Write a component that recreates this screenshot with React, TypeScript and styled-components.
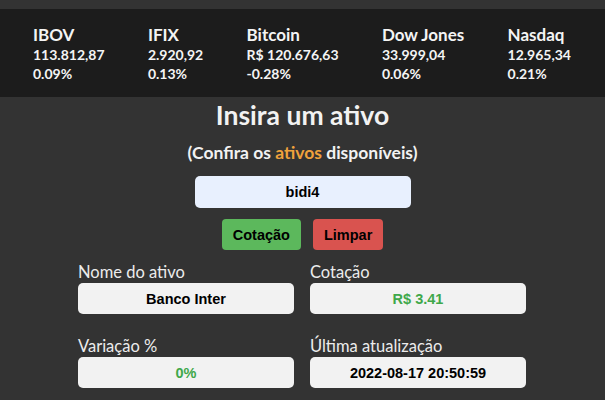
import React from "react";
import styled, { createGlobalStyle } from "styled-components";

const Global = createGlobalStyle`
  html, body { margin: 0; padding: 0; background: #333333; }
  body { font-family: Lato, "Noto Sans", sans-serif; color: #f2f2f2; }
  * { box-sizing: border-box; }
`;

const Page = styled.div`
  padding-top: 9px;
  min-height: 400px;
  background: #333333;
`;

const TickerBar = styled.div`
  background: #1c1c1c;
  height: 88px;
  padding: 15px 34px 14px 33px;
  display: flex;
  justify-content: space-between;
`;

const Ticker = styled.div`
  display: flex;
  flex-direction: column;
  font-weight: 700;
  color: #f4f4f4;
`;

const TickerName = styled.div`
  font-size: 17px;
  line-height: 21px;
`;

const TickerLine = styled.div`
  font-size: 14px;
  line-height: 19px;
`;

const Main = styled.main`
  display: flex;
  flex-direction: column;
  align-items: center;
`;

const Title = styled.h1`
  margin: 3px 0 0;
  font-size: 26.5px;
  line-height: 30px;
  font-weight: 700;
  color: #f2f2f2;
`;

const Subtitle = styled.p`
  margin: 13px 0 0;
  font-size: 17.5px;
  line-height: 20px;
  font-weight: 700;
  color: #f2f2f2;
`;

const Highlight = styled.span`
  color: #f0a23c;
`;

const Input = styled.input`
  margin-top: 13px;
  width: 216px;
  height: 32px;
  border: none;
  border-radius: 5px;
  background: #e8f0fe;
  text-align: center;
  font-family: "Liberation Sans", Arial, sans-serif;
  font-weight: 700;
  font-size: 14.5px;
  color: #000;
  outline: none;
`;

const ButtonRow = styled.div`
  margin-top: 11px;
  display: flex;
  gap: 12px;
`;

const Button = styled.button<{ $bg: string }>`
  height: 31px;
  padding: 0 11px;
  border: none;
  border-radius: 4px;
  background: ${(p) => p.$bg};
  font-family: "Liberation Sans", Arial, sans-serif;
  font-weight: 700;
  font-size: 14.5px;
  color: #000;
`;

const Grid = styled.div`
  margin-top: 13px;
  display: grid;
  grid-template-columns: 216px 216px;
  column-gap: 16px;
  row-gap: 23px;
  margin-left: -1px;
`;

const Field = styled.div`
  display: flex;
  flex-direction: column;
`;

const Label = styled.label`
  font-size: 16.5px;
  line-height: 19px;
  color: #ececec;
  margin-bottom: 1px;
`;

const Value = styled.div<{ $color?: string }>`
  height: 31px;
  border-radius: 5px;
  background: #f2f2f2;
  display: flex;
  align-items: center;
  justify-content: center;
  font-family: "Liberation Sans", Arial, sans-serif;
  font-weight: 700;
  font-size: 14.5px;
  color: ${(p) => p.$color ?? "#000"};
`;

const tickers = [
  { name: "IBOV", value: "113.812,87", pct: "0.09%" },
  { name: "IFIX", value: "2.920,92", pct: "0.13%" },
  { name: "Bitcoin", value: "R$ 120.676,63", pct: "-0.28%" },
  { name: "Dow Jones", value: "33.999,04", pct: "0.06%" },
  { name: "Nasdaq", value: "12.965,34", pct: "0.21%" },
];

export default function App() {
  return (
    <Page>
      <Global />
      <TickerBar>
        {tickers.map((t) => (
          <Ticker key={t.name}>
            <TickerName>{t.name}</TickerName>
            <TickerLine>{t.value}</TickerLine>
            <TickerLine>{t.pct}</TickerLine>
          </Ticker>
        ))}
      </TickerBar>
      <Main>
        <Title>Insira um ativo</Title>
        <Subtitle>
          (Confira os <Highlight>ativos</Highlight> disponíveis)
        </Subtitle>
        <Input defaultValue="bidi4" />
        <ButtonRow>
          <Button $bg="#5cb85c">Cotação</Button>
          <Button $bg="#d9534f">Limpar</Button>
        </ButtonRow>
        <Grid>
          <Field>
            <Label>Nome do ativo</Label>
            <Value>Banco Inter</Value>
          </Field>
          <Field>
            <Label>Cotação</Label>
            <Value $color="#3fa84a">R$ 3.41</Value>
          </Field>
          <Field>
            <Label>Variação %</Label>
            <Value $color="#3fa84a">0%</Value>
          </Field>
          <Field>
            <Label>Última atualização</Label>
            <Value>2022-08-17 20:50:59</Value>
          </Field>
        </Grid>
      </Main>
    </Page>
  );
}
